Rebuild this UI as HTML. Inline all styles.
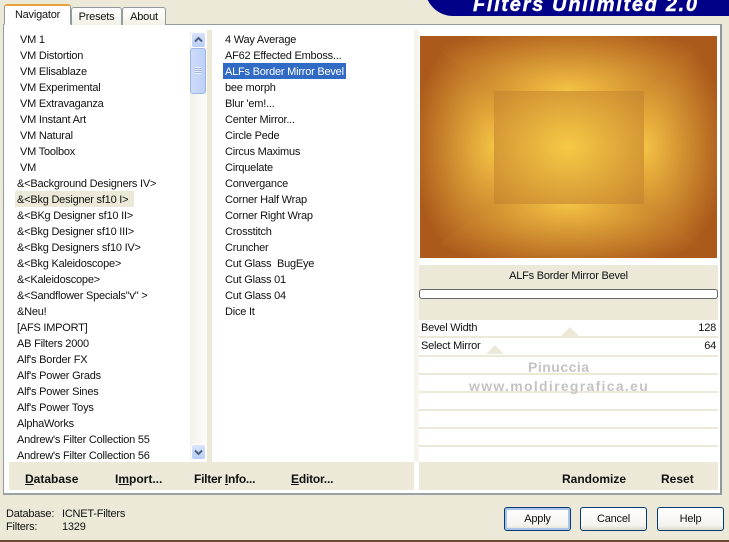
<!DOCTYPE html>
<html><head><meta charset="utf-8"><title>Filters Unlimited 2.0</title>
<style>
html,body{margin:0;padding:0}
body{width:729px;height:542px;position:relative;overflow:hidden;background:#ECE9D8;font-family:"Liberation Sans",sans-serif;font-size:11px;letter-spacing:-.22px;color:#111}
.a{position:absolute}
.row{position:absolute;white-space:nowrap;height:16px;line-height:18px}
.tab{position:absolute;box-sizing:border-box;border:1px solid #919B9C;border-bottom:none;border-radius:3px 3px 0 0;text-align:center;background:linear-gradient(#fff,#f3f1e6)}
.b{position:absolute;font-weight:bold;font-size:12px;letter-spacing:0;white-space:nowrap;line-height:16px;color:#111}
.btn{position:absolute;box-sizing:border-box;top:507px;width:67px;height:24px;border:1px solid #003C74;border-radius:3px;background:linear-gradient(#fff,#f4f3ee 80%,#dcd8ca);text-align:center;line-height:23px}
.line{position:absolute;left:419px;width:299px;height:2px;background:#ECE9D8}
</style></head><body>

<div class="a" style="left:425px;top:-30px;width:320px;height:46px;background:#000088;border-radius:0 0 0 28px"></div>
<div class="a" style="left:473px;top:-5px;font:italic bold 20px 'Liberation Sans',sans-serif;letter-spacing:1.7px;color:#fff;-webkit-text-stroke:.4px #fff;white-space:nowrap;line-height:20px">Filters Unlimited 2.0</div>

<div class="a" style="left:3px;top:24px;width:719px;height:471px;box-sizing:border-box;background:#fff;border:1px solid #919B9C;border-right:2px solid #8f9a9b;border-bottom:2px solid #9aa3a3"></div>

<div class="tab" style="left:71px;top:7px;width:51px;height:18px;line-height:18px">Presets</div>
<div class="tab" style="left:122px;top:7px;width:44px;height:18px;line-height:18px">About</div>
<div class="tab" style="left:4px;top:4px;width:67px;height:21px;line-height:19px;background:#fff;border-top:2px solid #E8A33A;border-bottom:1px solid #fff">Navigator</div>

<div class="a" style="left:190px;top:32px;width:17px;height:428px;background:linear-gradient(90deg,#f3f1ea,#fdfdfb)"></div>
<div class="a" style="left:207px;top:30px;width:5px;height:432px;background:#ECE9D8"></div>
<div class="a" style="left:414px;top:30px;width:5px;height:432px;background:#F6F4EC"></div>

<div class="a" style="left:191px;top:32px;width:15px;height:16px;box-sizing:border-box;border:1px solid #fff;border-radius:3px;background:linear-gradient(#d8e4fb,#b9cdf6)"></div>
<svg class="a" style="left:191px;top:32px" width="15" height="16"><path d="M4 9.5 7.5 6 11 9.5" fill="none" stroke="#4D6185" stroke-width="2"/></svg>
<div class="a" style="left:190px;top:48px;width:16px;height:46px;box-sizing:border-box;border:1px solid #9db4e6;border-radius:3px;background:linear-gradient(90deg,#cfdcfa,#bcd0f8)"></div>
<div class="a" style="left:195px;top:67px;width:6px;height:7px;background:repeating-linear-gradient(#eef3fe 0 1px,#9fb4e0 1px 2px)"></div>
<div class="a" style="left:191px;top:444px;width:15px;height:16px;box-sizing:border-box;border:1px solid #fff;border-radius:3px;background:linear-gradient(#d8e4fb,#b9cdf6)"></div>
<svg class="a" style="left:191px;top:444px" width="15" height="16"><path d="M4 6.5 7.5 10 11 6.5" fill="none" stroke="#4D6185" stroke-width="2"/></svg>

<div class="a" style="left:15px;top:191px;width:119px;height:16px;background:#ECE9D8"></div>
<div class="a" style="left:223px;top:63px;width:123px;height:16px;background:#316AC5"></div>

<div class="row" style="left:20px;top:31px">VM 1</div>
<div class="row" style="left:20px;top:47px">VM Distortion</div>
<div class="row" style="left:20px;top:63px">VM Elisablaze</div>
<div class="row" style="left:20px;top:79px">VM Experimental</div>
<div class="row" style="left:20px;top:95px">VM Extravaganza</div>
<div class="row" style="left:20px;top:111px">VM Instant Art</div>
<div class="row" style="left:20px;top:127px">VM Natural</div>
<div class="row" style="left:20px;top:143px">VM Toolbox</div>
<div class="row" style="left:20px;top:159px">VM</div>
<div class="row" style="left:17px;top:175px">&amp;&lt;Background Designers IV&gt;</div>
<div class="row" style="left:17px;top:191px">&amp;&lt;Bkg Designer sf10 I&gt;</div>
<div class="row" style="left:17px;top:207px">&amp;&lt;BKg Designer sf10 II&gt;</div>
<div class="row" style="left:17px;top:223px">&amp;&lt;Bkg Designer sf10 III&gt;</div>
<div class="row" style="left:17px;top:239px">&amp;&lt;Bkg Designers sf10 IV&gt;</div>
<div class="row" style="left:17px;top:255px">&amp;&lt;Bkg Kaleidoscope&gt;</div>
<div class="row" style="left:17px;top:271px">&amp;&lt;Kaleidoscope&gt;</div>
<div class="row" style="left:17px;top:287px">&amp;&lt;Sandflower Specials"v" &gt;</div>
<div class="row" style="left:17px;top:303px">&amp;Neu!</div>
<div class="row" style="left:17px;top:319px">[AFS IMPORT]</div>
<div class="row" style="left:17px;top:335px">AB Filters 2000</div>
<div class="row" style="left:17px;top:351px">Alf's Border FX</div>
<div class="row" style="left:17px;top:367px">Alf's Power Grads</div>
<div class="row" style="left:17px;top:383px">Alf's Power Sines</div>
<div class="row" style="left:17px;top:399px">Alf's Power Toys</div>
<div class="row" style="left:17px;top:415px">AlphaWorks</div>
<div class="row" style="left:17px;top:431px">Andrew's Filter Collection 55</div>
<div class="row" style="left:17px;top:447px">Andrew's Filter Collection 56</div>

<div class="row" style="left:225px;top:31px">4 Way Average</div>
<div class="row" style="left:225px;top:47px">AF62 Effected Emboss...</div>
<div class="row" style="left:225px;top:63px;color:#fff">ALFs Border Mirror Bevel</div>
<div class="row" style="left:225px;top:79px">bee morph</div>
<div class="row" style="left:225px;top:95px">Blur 'em!...</div>
<div class="row" style="left:225px;top:111px">Center Mirror...</div>
<div class="row" style="left:225px;top:127px">Circle Pede</div>
<div class="row" style="left:225px;top:143px">Circus Maximus</div>
<div class="row" style="left:225px;top:159px">Cirquelate</div>
<div class="row" style="left:225px;top:175px">Convergance</div>
<div class="row" style="left:225px;top:191px">Corner Half Wrap</div>
<div class="row" style="left:225px;top:207px">Corner Right Wrap</div>
<div class="row" style="left:225px;top:223px">Crosstitch</div>
<div class="row" style="left:225px;top:239px">Cruncher</div>
<div class="row" style="left:225px;top:255px">Cut Glass&nbsp; BugEye</div>
<div class="row" style="left:225px;top:271px">Cut Glass 01</div>
<div class="row" style="left:225px;top:287px">Cut Glass 04</div>
<div class="row" style="left:225px;top:303px">Dice It</div>

<svg class="a" style="left:420px;top:36px" width="297" height="222" viewBox="420 36 297 222" shape-rendering="crispEdges">
<defs>
<radialGradient id="gT" gradientUnits="userSpaceOnUse" cx="0" cy="0" r="1" gradientTransform="translate(568 91) scale(165 68)"><stop offset="0" stop-color="#F4C345"/><stop offset="1" stop-color="#AC5A1B"/></radialGradient>
<radialGradient id="gB" gradientUnits="userSpaceOnUse" cx="0" cy="0" r="1" gradientTransform="translate(568 204) scale(165 68)"><stop offset="0" stop-color="#F4C345"/><stop offset="1" stop-color="#AC5A1B"/></radialGradient>
<radialGradient id="gL" gradientUnits="userSpaceOnUse" cx="0" cy="0" r="1" gradientTransform="translate(494 147) scale(82 125)"><stop offset="0" stop-color="#F4C345"/><stop offset="1" stop-color="#AC5A1B"/></radialGradient>
<radialGradient id="gR" gradientUnits="userSpaceOnUse" cx="0" cy="0" r="1" gradientTransform="translate(644 147) scale(82 125)"><stop offset="0" stop-color="#F4C345"/><stop offset="1" stop-color="#AC5A1B"/></radialGradient>
<radialGradient id="gC" gradientUnits="userSpaceOnUse" cx="0" cy="0" r="1" gradientTransform="translate(568 147) scale(100 78)"><stop offset="0" stop-color="#F7C845"/><stop offset="1" stop-color="#C98A30"/></radialGradient>
</defs>
<rect x="420" y="36" width="297" height="222" fill="#BE7A26"/>
<polygon points="420,36 717,36 644,91 494,91" fill="url(#gT)"/>
<polygon points="420,258 717,258 644,204 494,204" fill="url(#gB)"/>
<polygon points="420,36 494,91 494,204 420,258" fill="url(#gL)"/>
<polygon points="717,36 644,91 644,204 717,258" fill="url(#gR)"/>
<rect x="494" y="91" width="150" height="113" fill="url(#gC)"/>
</svg>

<div class="a" style="left:419px;top:265px;width:299px;height:55px;background:#ECE9D8"></div>
<div class="row" style="left:419px;top:267px;width:299px;text-align:center">ALFs Border Mirror Bevel</div>
<div class="a" style="left:419px;top:289px;width:299px;height:10px;box-sizing:border-box;border:1px solid #666;border-radius:3px;background:#fff"></div>

<div class="line" style="top:336px"></div>
<div class="line" style="top:355px"></div>
<div class="line" style="top:373px"></div>
<div class="line" style="top:391px"></div>
<div class="line" style="top:409px"></div>
<div class="line" style="top:427px"></div>
<div class="line" style="top:445px"></div>
<div class="a" style="left:561px;top:327px;width:0;height:0;border-left:9px solid transparent;border-right:9px solid transparent;border-bottom:9px solid #ECE9D8"></div>
<div class="a" style="left:486px;top:345px;width:0;height:0;border-left:9px solid transparent;border-right:9px solid transparent;border-bottom:9px solid #ECE9D8"></div>
<div class="row" style="left:421px;top:319px">Bevel Width</div>
<div class="row" style="left:421px;top:337px">Select Mirror</div>
<div class="row" style="right:13px;top:319px">128</div>
<div class="row" style="right:13px;top:337px">64</div>

<div class="a" style="left:528px;top:359px;font:bold 14px 'Liberation Sans',sans-serif;color:#c4c4c4;white-space:nowrap;line-height:16px;letter-spacing:.5px">Pinuccia</div>
<div class="a" style="left:469px;top:378px;font:bold 14px 'Liberation Sans',sans-serif;color:#c4c4c4;white-space:nowrap;line-height:16px;letter-spacing:1.3px">www.moldiregrafica.eu</div>

<div class="a" style="left:9px;top:462px;width:405px;height:28px;background:#ECE9D8"></div>
<div class="a" style="left:419px;top:462px;width:299px;height:28px;background:#ECE9D8"></div>
<div class="b" style="left:25px;top:471px"><u>D</u>atabase</div>
<div class="b" style="left:115px;top:471px">I<u>m</u>port...</div>
<div class="b" style="left:194px;top:471px;letter-spacing:-.25px">Filter <u>I</u>nfo...</div>
<div class="b" style="left:291px;top:471px;letter-spacing:-.2px"><u>E</u>ditor...</div>
<div class="b" style="left:562px;top:471px">Randomize</div>
<div class="b" style="left:661px;top:471px">Reset</div>

<div class="row" style="left:6px;top:505px">Database:</div>
<div class="row" style="left:62px;top:505px">ICNET-Filters</div>
<div class="row" style="left:6px;top:518px">Filters:</div>
<div class="row" style="left:62px;top:518px">1329</div>

<div class="btn" style="left:504px;box-shadow:inset 0 0 0 2px #a9c3ea">Apply</div>
<div class="btn" style="left:580px">Cancel</div>
<div class="btn" style="left:657px">Help</div>
<div class="a" style="left:0;top:540px;width:729px;height:2px;background:#6b4a35"></div>
</body></html>
